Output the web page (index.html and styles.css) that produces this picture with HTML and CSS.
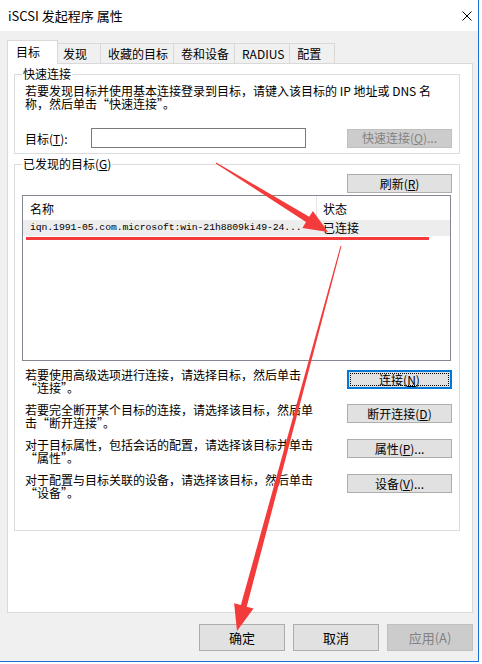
FILE: index.html
```html
<!DOCTYPE html>
<html lang="zh-CN">
<head>
    <meta charset="UTF-8">
    <meta name="viewport" content="width=device-width, initial-scale=1.0">
    <title>iSCSI 发起程序 属性</title>
    <link rel="stylesheet" href="styles.css">
</head>
<body>
    <div class="window">
        <div class="titlebar">
            <span class="title">iSCSI 发起程序 属性</span>
            <svg class="close" width="10" height="10" viewBox="0 0 10 10"><path d="M0.5 0.5 L9.5 9.5 M9.5 0.5 L0.5 9.5" stroke="#000" stroke-width="1" fill="none"/></svg>
        </div>

        <div class="tabs">
            <div class="tab active">目标</div>
            <div class="tab">发现</div>
            <div class="tab">收藏的目标</div>
            <div class="tab">卷和设备</div>
            <div class="tab">RADIUS</div>
            <div class="tab">配置</div>
        </div>

        <div class="panel">
            <fieldset class="group quick">
                <legend>快速连接</legend>
                <p class="desc">若要发现目标并使用基本连接登录到目标，请键入该目标的 IP 地址或 DNS 名<br>称，然后单击“快速连接”。</p>
                <div class="quick-row">
                    <label for="target">目标(<u>T</u>):</label>
                    <input type="text" id="target">
                    <button class="btn" disabled>快速连接(<u>Q</u>)...</button>
                </div>
            </fieldset>

            <fieldset class="group targets">
                <legend>已发现的目标(<u>G</u>)</legend>
                <div class="refresh-row">
                    <button class="btn">刷新(<u>R</u>)</button>
                </div>
                <div class="list">
                    <div class="list-head">
                        <span class="col-name">名称</span>
                        <span class="col-state">状态</span>
                    </div>
                    <div class="list-row selected">
                        <span class="col-name iqn">iqn.1991-05.com.microsoft:win-21h8809ki49-24...</span>
                        <span class="col-state">已连接</span>
                    </div>
                </div>

                <div class="action first">
                    <p>若要使用高级选项进行连接，请选择目标，然后单击<br>“连接”。</p>
                    <button class="btn focus">连接(<u>N</u>)</button>
                </div>
                <div class="action">
                    <p>若要完全断开某个目标的连接，请选择该目标，然后单<br>击“断开连接”。</p>
                    <button class="btn">断开连接(<u>D</u>)</button>
                </div>
                <div class="action">
                    <p>对于目标属性，包括会话的配置，请选择该目标并单击<br>“属性”。</p>
                    <button class="btn">属性(<u>P</u>)...</button>
                </div>
                <div class="action">
                    <p>对于配置与目标关联的设备，请选择该目标，然后单击<br>“设备”。</p>
                    <button class="btn">设备(<u>V</u>)...</button>
                </div>
            </fieldset>
        </div>

        <div class="footer">
            <button class="btn dlg">确定</button>
            <button class="btn dlg">取消</button>
            <button class="btn dlg" disabled>应用(A)</button>
        </div>

        <!-- red annotation marks -->
        <svg class="marks" width="482" height="664" viewBox="0 0 482 664">
            <rect x="26" y="237" width="403" height="3" fill="#f33b3b"/>
            <polygon points="216.3,162.6 309.2,216.8 312.9,210.9 328,232 302.4,227.9 306,222 215.7,163.4" fill="#f33b3b"/>
            <polygon points="341.5,246.1 246.7,606.7 253.5,608.5 237,631 234.1,603.3 240.9,605.1 340.5,245.9" fill="#f33b3b"/>
        </svg>
    </div>
</body>
</html>
```

FILE: styles.css
```css
* {
    box-sizing: border-box;
}
body {
    margin: 0;
    background: #fff;
    font-family: "Noto Sans CJK SC", sans-serif;
    font-size: 12px;
    color: #000;
}
.window {
    position: relative;
    width: 479px;
    height: 662px;
    background: #f0f0f0;
    border-right: 1px solid #1c72d4;
    border-bottom: 1px solid #1c72d4;
    overflow: hidden;
}
.titlebar {
    height: 31px;
    background: #fff;
    display: flex;
    align-items: center;
    justify-content: space-between;
    padding: 0 6px 0 8px;
}
.title {
    font-size: 13px;
}

/* tabs */
.tabs {
    display: flex;
    align-items: flex-end;
    height: 23px;
    margin-top: 9px;
    padding-left: 7px;
}
.tab {
    height: 20px;
    min-width: 46px;
    padding: 0 5px 0 7px;
    margin-left: -1px;
    border: 1px solid #d9d9d9;
    border-bottom: 0;
    background: #f0f0f0;
    line-height: 19px;
}
.tab.active {
    position: relative;
    z-index: 1;
    width: 51px;
    height: 24px;
    margin: 0 -2px -1px 0;
    padding-left: 8px;
    background: #fff;
    line-height: 22px;
}

.panel {
    height: 550px;
    margin: 0 5px 0 7px;
    padding: 3px 0 0 6px;
    background: #fff;
    border: 1px solid #d9d9d9;
}

/* group boxes */
.group {
    width: 446px;
    margin: 0;
    padding: 0 7px 5px 7px;
    border: 1px solid #dcdcdc;
    min-width: 0;
}
.group legend {
    padding: 0 1px;
    line-height: 14px;
}
.targets {
    margin-top: 3px;
    padding-bottom: 31px;
}
.desc {
    margin: 3px 0 0 3px;
    line-height: 13px;
}
.quick-row {
    display: flex;
    align-items: center;
    margin-top: 18px;
}
.quick-row label {
    width: 66px;
    margin-left: 3px;
}
.quick-row input {
    width: 215px;
    height: 20px;
    border: 1px solid #7a7a7a;
    outline: none;
}
.quick-row .btn {
    margin-left: auto;
}

/* buttons */
.btn {
    width: 105px;
    height: 19px;
    padding: 0;
    background: #e1e1e1;
    border: 1px solid #adadad;
    font-family: inherit;
    font-size: 12px;
    color: #000;
    line-height: 16px;
}
.btn:disabled {
    background: #cccccc;
    border-color: #bfbfbf;
    color: #838383;
}
.btn.focus {
    border-color: #0078d7;
    box-shadow: inset 0 0 0 1px #0078d7;
    outline: 1px dotted #000;
    outline-offset: -4px;
}

.refresh-row {
    display: flex;
    justify-content: flex-end;
    margin-top: 3px;
}

/* list view */
.list {
    height: 166px;
    margin: 2px 1px 0 0;
    border: 1px solid #828790;
    background: #fff;
}
.list-head,
.list-row {
    display: flex;
}
.list-head {
    height: 24px;
    padding-top: 4px;
    line-height: 18px;
}
.col-name {
    width: 294px;
    padding-left: 7px;
    white-space: nowrap;
    overflow: hidden;
}
.list-head .col-name {
    border-right: 1px solid #e5e5e5;
    margin-top: -4px;
    padding-top: 4px;
}
.col-state {
    padding-left: 6px;
}
.list-row {
    height: 16px;
    line-height: 16px;
}
.list-row.selected {
    background: #ededed;
}
.iqn {
    font-family: "Liberation Mono", monospace;
    font-size: 9.8px;
    letter-spacing: -0.1px;
}

/* action rows */
.action {
    display: flex;
    justify-content: space-between;
    align-items: flex-start;
    margin-top: 9px;
}
.action.first {
    margin-top: 7px;
}
.action p {
    margin: 0 0 0 3px;
    line-height: 13px;
}
.action .btn {
    margin-top: 1px;
}
.action.first .btn {
    margin-top: 2px;
}

.footer {
    display: flex;
    justify-content: flex-end;
    gap: 8px;
    margin-top: 11px;
    padding-right: 5px;
}
.btn.dlg {
    width: 86px;
    height: 27px;
    font-size: 13px;
    line-height: 24px;
}

.marks {
    position: absolute;
    top: 0;
    left: 0;
    pointer-events: none;
}
```
